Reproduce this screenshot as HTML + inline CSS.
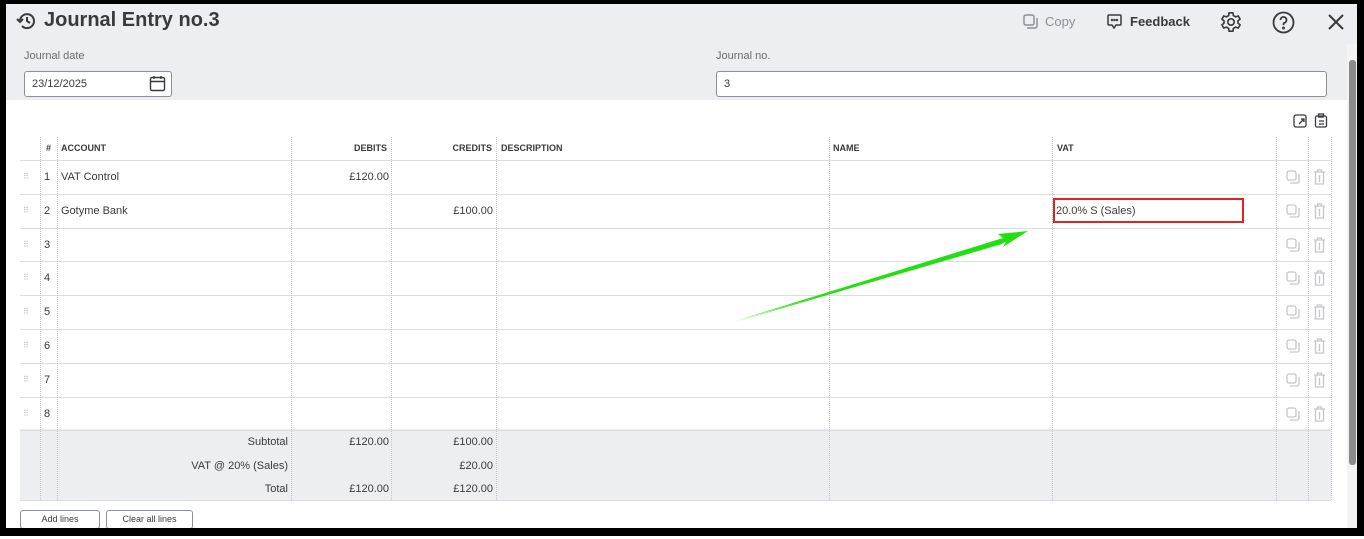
<!DOCTYPE html>
<html><head><meta charset="utf-8"><style>
*{box-sizing:border-box;margin:0;padding:0}
body{width:1364px;height:539px;background:#fff;font-family:"Liberation Sans",sans-serif;position:relative;overflow:hidden;color:#393a3d}
.frame{position:absolute;left:0;top:0;width:1364px;height:536px;background:#000}
.page{position:absolute;left:6px;top:4px;width:1351px;height:524px;background:#fff;overflow:hidden}
.hdr{position:absolute;left:0;top:0;width:1351px;height:96px;background:#eceef1}
.abs{position:absolute}
.lbl{font-size:11px;color:#6b6c72}
.inp{position:absolute;border:1px solid #8d9096;border-radius:3px;background:#fff;font-size:11px;padding-left:7px;line-height:24px}
.th{position:absolute;top:133px;height:23px;font-size:9px;font-weight:bold;line-height:23px;color:#393a3d}
.vl{position:absolute;border-left:1px dotted #c4c6ca}
.hl{position:absolute;left:14px;width:1311px;border-top:1px solid #dcdde0}
.cell{position:absolute;font-size:11px;line-height:14px}
.r{text-align:right}
.btn{position:absolute;top:506px;height:19px;border:1px solid #8d9096;border-radius:3px;font-size:9px;text-align:center;line-height:17px;background:#fff}
</style></head><body>
<div class="frame"></div>
<div class="page">
<div class="hdr"></div>
<svg class="abs" style="left:10px;top:6px" width="22" height="22" viewBox="0 0 22 22" fill="none" stroke="#393a3d" stroke-width="2"><path d="M4 11a7 7 0 1 1 2 5"/><path d="M1 9l3 3 3-3"/><path d="M11 7v4l3 2"/></svg>
<div class="abs" style="left:38px;top:5px;font-size:20px;font-weight:bold;color:#393a3d">Journal Entry no.3</div>
<svg class="abs" style="left:1017px;top:10px" width="16" height="16" viewBox="0 0 16 16" fill="none" stroke="#8d9096" stroke-width="1.5"><rect x="1" y="1" width="10" height="10" rx="2"/><path d="M4 14h8a2 2 0 0 0 2-2V4"/></svg>
<div class="abs" style="left:1039px;top:10px;font-size:13px;color:#8d9096">Copy</div>
<svg class="abs" style="left:1100px;top:9px" width="17" height="17" viewBox="0 0 17 17" fill="none" stroke="#393a3d" stroke-width="1.5"><path d="M3 2h11a1 1 0 0 1 1 1v8a1 1 0 0 1-1 1h-4l-2 3-2-3H3a1 1 0 0 1-1-1V3a1 1 0 0 1 1-1z"/><circle cx="6" cy="7" r=".5"/><circle cx="8.5" cy="7" r=".5"/><circle cx="11" cy="7" r=".5"/></svg>
<div class="abs" style="left:1124px;top:10px;font-size:13px;font-weight:bold;color:#393a3d">Feedback</div>
<svg class="abs" style="left:1214px;top:7px" width="22" height="22" viewBox="0 0 24 24" fill="none" stroke="#393a3d" stroke-width="1.8"><circle cx="12" cy="12" r="3.5"/><path d="M10 2h4l.6 3 2.4 1.4 2.9-1 2 3.4-2.3 2v2.4l2.3 2-2 3.4-2.9-1L14.6 19l-.6 3h-4l-.6-3L7 17.6l-2.9 1-2-3.4 2.3-2v-2.4l-2.3-2 2-3.4 2.9 1L9.4 5z"/></svg>
<svg class="abs" style="left:1266px;top:7px" width="23" height="23" viewBox="0 0 23 23" fill="none" stroke="#393a3d" stroke-width="1.8"><circle cx="11.5" cy="11.5" r="10"/><path d="M8.5 9a3 3 0 1 1 4 2.8c-.7.3-1 .8-1 1.5v.8"/><circle cx="11.5" cy="17" r=".6"/></svg>
<svg class="abs" style="left:1321px;top:9px" width="18" height="18" viewBox="0 0 18 18" stroke="#393a3d" stroke-width="2"><path d="M2 2l14 14M16 2L2 16"/></svg>
<div class="abs lbl" style="left:18px;top:46px">Journal date</div>
<div class="inp" style="left:18px;top:67px;width:148px;height:26px">23/12/2025</div>
<svg class="abs" style="left:143px;top:71px" width="17" height="17" viewBox="0 0 17 17" fill="none" stroke="#393a3d" stroke-width="1.4"><rect x="1.5" y="2.5" width="14" height="13" rx="1.5"/><path d="M1.5 6.5h14M5 1v3M12 1v3"/></svg>
<div class="abs lbl" style="left:710px;top:46px">Journal no.</div>
<div class="inp" style="left:710px;top:67px;width:611px;height:26px">3</div>
<div class="abs" style="left:1341px;top:40px;width:10px;height:484px;background:#f3f3f3"></div>
<div class="abs" style="left:1343px;top:56px;width:7px;height:405px;background:#8a8a8a;border-radius:3px"></div>
<svg class="abs" style="left:1287px;top:110px" width="14" height="14" viewBox="0 0 14 14" fill="none" stroke="#393a3d" stroke-width="1.3"><rect x="1" y="1" width="12" height="12" rx="2"/><path d="M6 10l5-5M8 5h3v3"/></svg>
<svg class="abs" style="left:1308px;top:109px" width="14" height="15" viewBox="0 0 14 15" fill="none" stroke="#393a3d" stroke-width="1.3"><rect x="1.5" y="3" width="11" height="11" rx="1.5"/><rect x="4.5" y="1" width="5" height="3"/><path d="M5 8h5M5 11h5"/></svg>
<div class="th" style="left:40px">#</div>
<div class="th" style="left:55px">ACCOUNT</div>
<div class="th r" style="left:285px;width:96px">DEBITS</div>
<div class="th r" style="left:385px;width:101px">CREDITS</div>
<div class="th" style="left:495px">DESCRIPTION</div>
<div class="th" style="left:827px">NAME</div>
<div class="th" style="left:1051px">VAT</div>
<div class="abs" style="left:14px;top:425px;width:1311px;height:72px;background:#eceef1"></div>
<div class="hl" style="top:156px"></div><div class="hl" style="top:190px"></div><div class="hl" style="top:224px"></div><div class="hl" style="top:257px"></div><div class="hl" style="top:291px"></div><div class="hl" style="top:325px"></div><div class="hl" style="top:359px"></div><div class="hl" style="top:393px"></div><div class="hl" style="top:426px"></div><div class="hl" style="top:496px"></div>
<div class="vl" style="left:34px;top:133px;height:363px"></div>
<div class="vl" style="left:51px;top:133px;height:363px"></div>
<div class="vl" style="left:285px;top:133px;height:363px"></div>
<div class="vl" style="left:385px;top:133px;height:363px"></div>
<div class="vl" style="left:490px;top:133px;height:363px"></div>
<div class="vl" style="left:823px;top:133px;height:363px"></div>
<div class="vl" style="left:1046px;top:133px;height:363px"></div>
<div class="vl" style="left:1270px;top:133px;height:363px"></div>
<div class="vl" style="left:1302px;top:133px;height:363px"></div>
<div class="vl" style="left:1325px;top:133px;height:363px"></div>
<div id="rows"></div>
<div class="cell" style="left:55px;top:166px">VAT Control</div>
<div class="cell r" style="left:285px;top:166px;width:98px">£120.00</div>
<div class="cell" style="left:55px;top:200px">Gotyme Bank</div>
<div class="cell r" style="left:385px;top:200px;width:102px">£100.00</div>
<div class="abs" style="left:1047px;top:194px;width:191px;height:25px;border:2px solid #e32222"></div>
<div class="cell" style="left:1050px;top:200px">20.0% S (Sales)</div>
<div class="cell r" style="left:60px;top:431px;width:222px">Subtotal</div>
<div class="cell r" style="left:285px;top:431px;width:98px">£120.00</div>
<div class="cell r" style="left:385px;top:431px;width:102px">£100.00</div>
<div class="cell r" style="left:60px;top:455px;width:222px">VAT @ 20% (Sales)</div>
<div class="cell r" style="left:385px;top:455px;width:102px">£20.00</div>
<div class="cell r" style="left:60px;top:478px;width:222px">Total</div>
<div class="cell r" style="left:285px;top:478px;width:98px">£120.00</div>
<div class="cell r" style="left:385px;top:478px;width:102px">£120.00</div>
<div class="btn" style="left:14px;width:80px">Add lines</div>
<div class="btn" style="left:100px;width:87px">Clear all lines</div>
<svg class="abs" style="left:0;top:0" width="1351" height="524"><polygon points="729,317 1000,238 997,243 1022,227 992,230 997,234" fill="#22e010"/><polygon points="729,318 998,236 996,240" fill="#22e010"/></svg>
</div>
<script>
var h='';for(var i=0;i<8;i++){var y=156+i*33.8;
h+='<div class="cell" style="left:17px;top:'+(y+10)+'px;color:#bbb;font-size:8px;letter-spacing:-1px">⠿</div>';
h+='<div class="cell" style="left:38px;top:'+(y+10)+'px">'+(i+1)+'</div>';
h+='<svg class="abs" style="left:1280px;top:'+(y+10)+'px" width="14" height="14" viewBox="0 0 14 14" fill="none" stroke="#c4c6ca" stroke-width="1.3"><rect x="1" y="1" width="9" height="9" rx="2"/><path d="M4 13h7a2 2 0 0 0 2-2V4"/></svg>';
h+='<svg class="abs" style="left:1307px;top:'+(y+9)+'px" width="13" height="16" viewBox="0 0 13 16" fill="none" stroke="#c4c6ca" stroke-width="1.3"><path d="M1 3h11M4.5 3V1h4v2M2.5 3v12h8V3M6.5 6v7"/></svg>';}
document.getElementById('rows').innerHTML=h;
</script>
</body></html>
